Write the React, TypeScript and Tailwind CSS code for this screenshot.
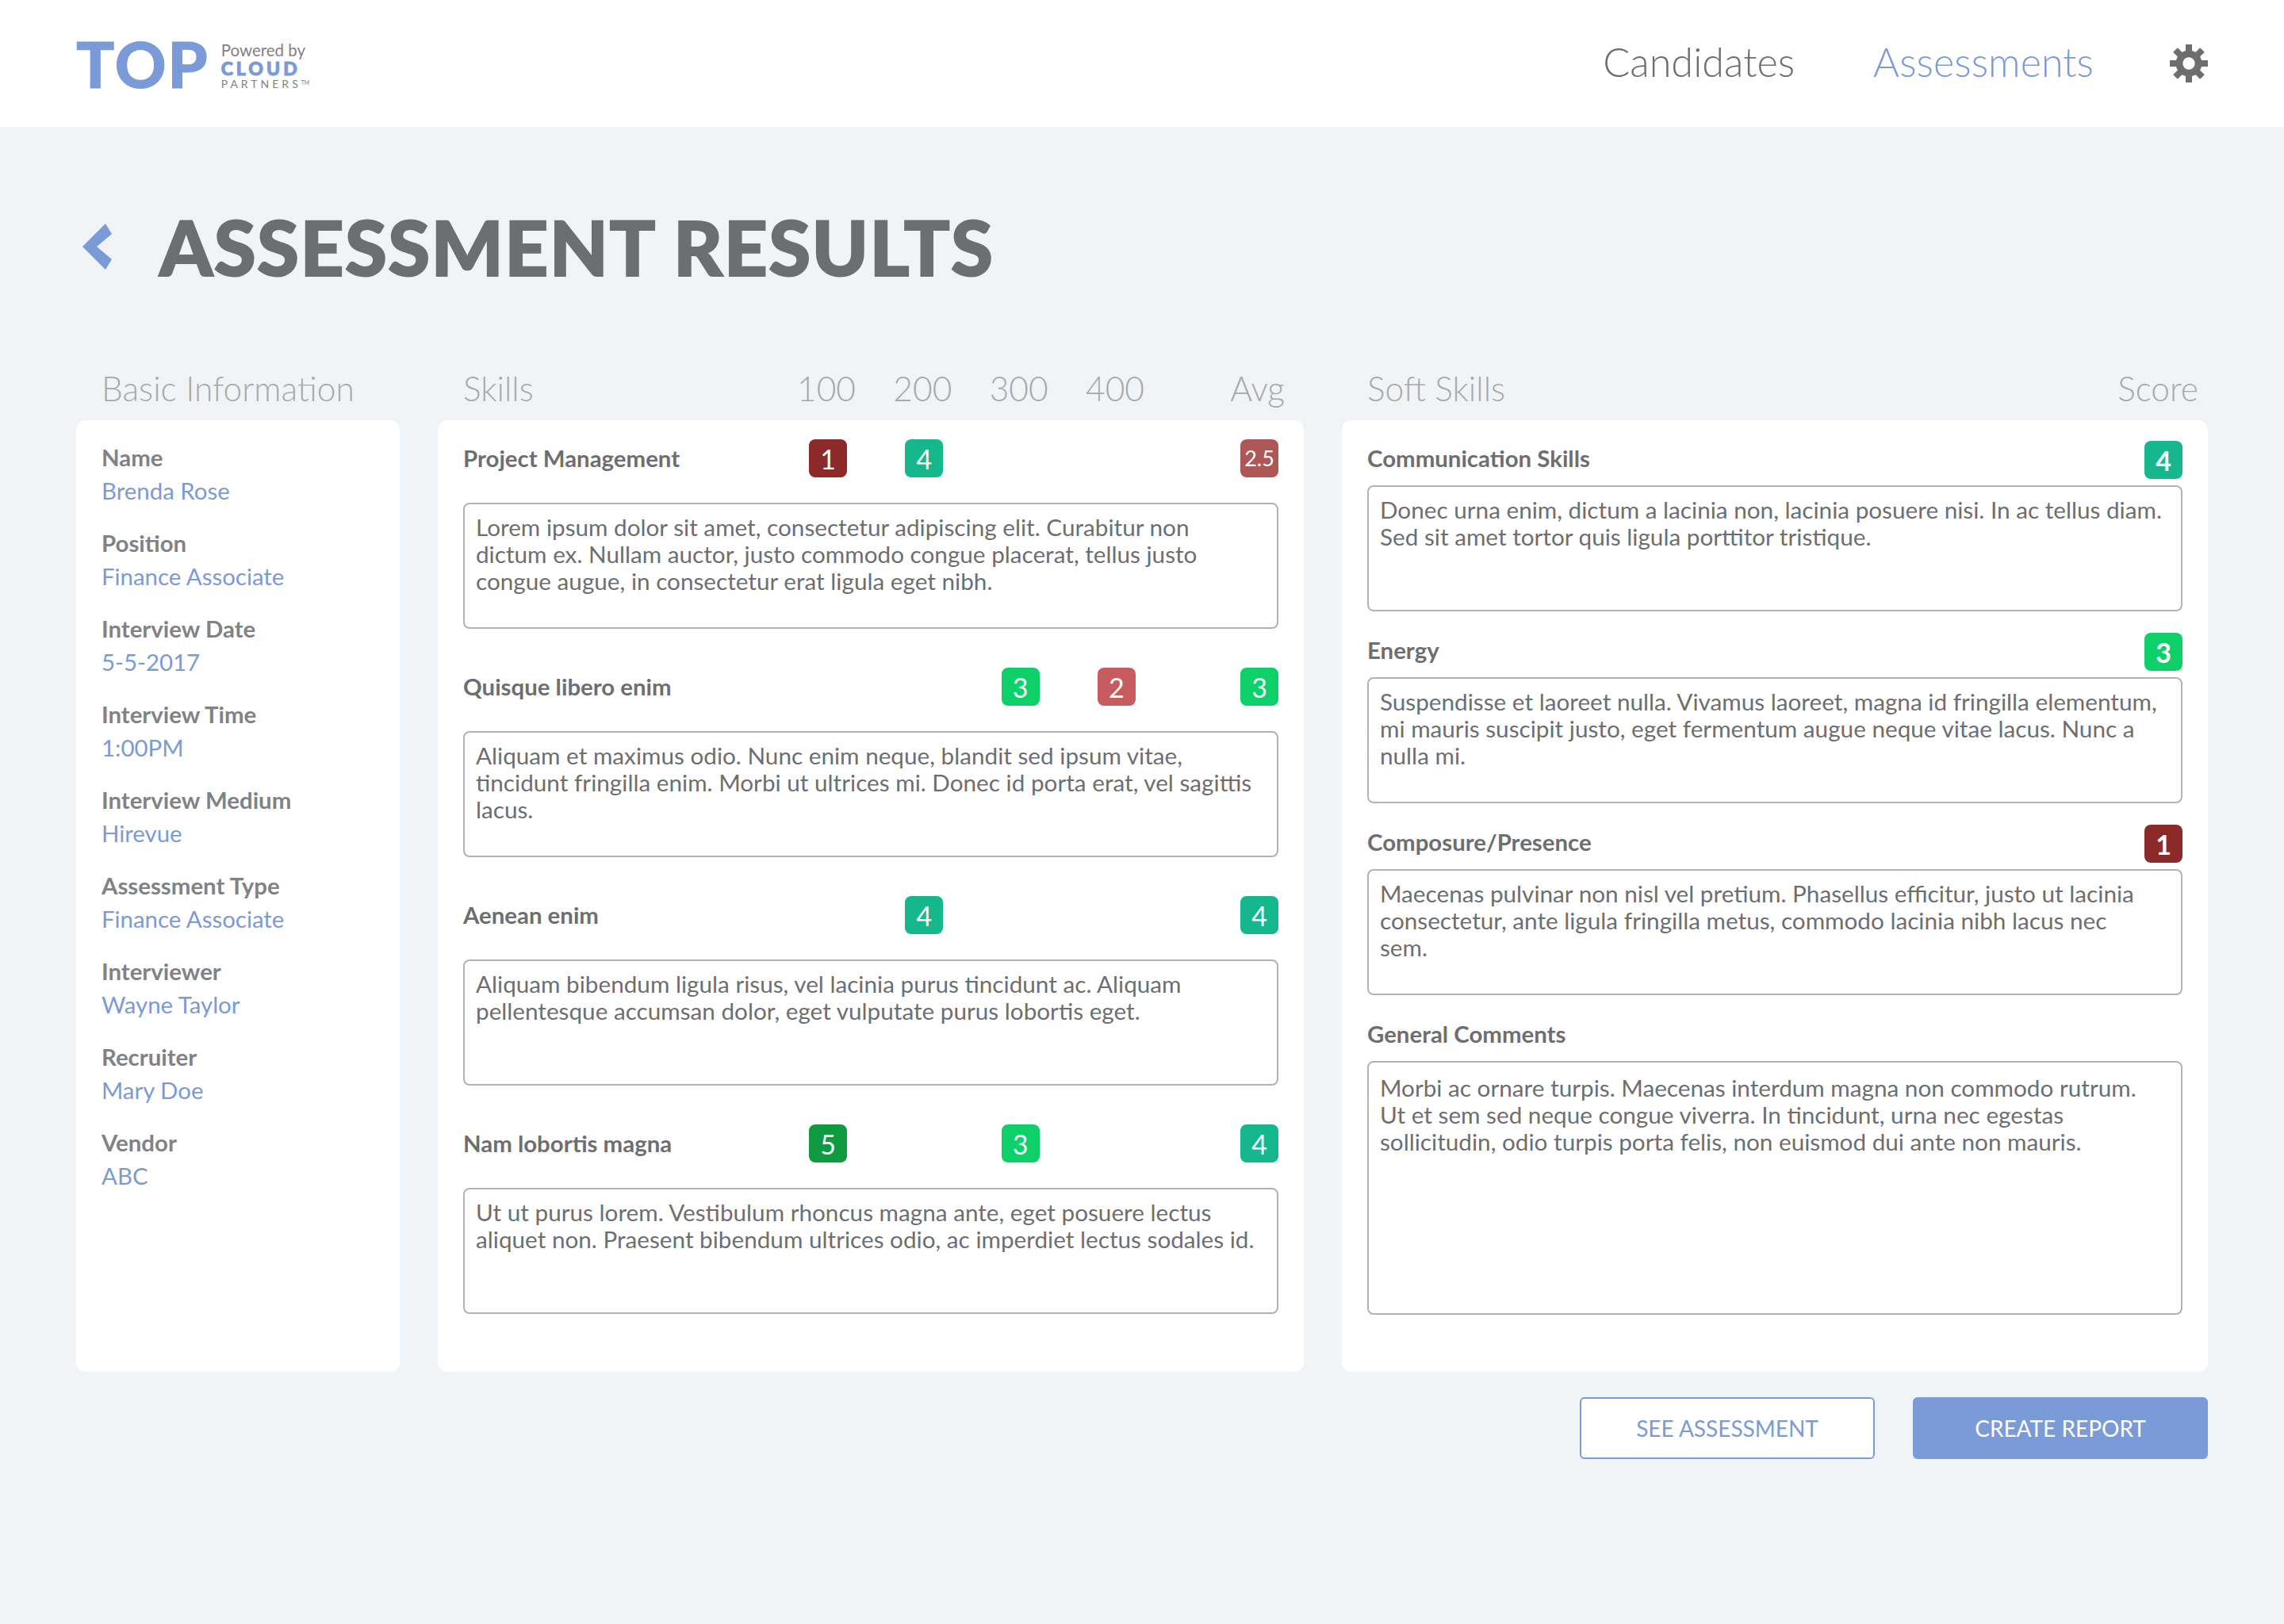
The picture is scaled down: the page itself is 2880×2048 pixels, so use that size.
const sans = { fontFamily: 'Lato, "Noto Sans", sans-serif' };

const BADGE: Record<string, string> = {
  '1': 'bg-[#8c2a2a]',
  '2': 'bg-[#c75c60]',
  '2.5': 'bg-[#ae5757]',
  '3': 'bg-[#0dd068]',
  '4': 'bg-[#17b78e]',
  '5': 'bg-[#0f9a42]',
};

const BASIC_INFO = [
  ['Name', 'Brenda Rose'],
  ['Position', 'Finance Associate'],
  ['Interview Date', '5-5-2017'],
  ['Interview Time', '1:00PM'],
  ['Interview Medium', 'Hirevue'],
  ['Assessment Type', 'Finance Associate'],
  ['Interviewer', 'Wayne Taylor'],
  ['Recruiter', 'Mary Doe'],
  ['Vendor', 'ABC'],
];

const SKILLS = [
  {
    name: 'Project Management',
    scores: ['1', '4', '', ''],
    avg: '2.5',
    text: 'Lorem ipsum dolor sit amet, consectetur adipiscing elit. Curabitur non dictum ex. Nullam auctor, justo commodo congue placerat, tellus justo congue augue, in consectetur erat ligula eget nibh.',
  },
  {
    name: 'Quisque libero enim',
    scores: ['', '', '3', '2'],
    avg: '3',
    text: 'Aliquam et maximus odio. Nunc enim neque, blandit sed ipsum vitae, tincidunt fringilla enim. Morbi ut ultrices mi. Donec id porta erat, vel sagittis lacus.',
  },
  {
    name: 'Aenean enim',
    scores: ['', '4', '', ''],
    avg: '4',
    text: 'Aliquam bibendum ligula risus, vel lacinia purus tincidunt ac. Aliquam pellentesque accumsan dolor, eget vulputate purus lobortis eget.',
  },
  {
    name: 'Nam lobortis magna',
    scores: ['5', '', '3', ''],
    avg: '4',
    text: 'Ut ut purus lorem. Vestibulum rhoncus magna ante, eget posuere lectus aliquet non. Praesent bibendum ultrices odio, ac imperdiet lectus sodales id.',
  },
];

const SOFT_SKILLS = [
  {
    name: 'Communication Skills',
    score: '4',
    text: 'Donec urna enim, dictum a lacinia non, lacinia posuere nisi. In ac tellus diam. Sed sit amet tortor quis ligula porttitor tristique.',
  },
  {
    name: 'Energy',
    score: '3',
    text: 'Suspendisse et laoreet nulla. Vivamus laoreet, magna id fringilla elementum, mi mauris suscipit justo, eget fermentum augue neque vitae lacus. Nunc a nulla mi.',
  },
  {
    name: 'Composure/Presence',
    score: '1',
    text: 'Maecenas pulvinar non nisl vel pretium. Phasellus efficitur, justo ut lacinia consectetur, ante ligula fringilla metus, commodo lacinia nibh lacus nec\nsem.',
  },
];

function Badge({ value }: { value: string }) {
  return (
    <div
      className={`flex h-[48px] w-[48px] items-center justify-center rounded-[8px] text-white ${BADGE[value]} ${
        value === '2.5' ? 'text-[27px]' : 'text-[34px]'
      }`}
    >
      {value}
    </div>
  );
}

function TextBox({ text, size = 'h-[159px] py-[12px]' }: { text: string; size?: string }) {
  return (
    <div className={`${size} whitespace-pre-line rounded-[8px] border-2 border-[#b1b3b6] bg-white px-[14px] text-[29.7px] leading-[34px] text-[#6d6e70]`}>
      {text}
    </div>
  );
}

function Gear() {
  return (
    <svg viewBox="0 0 48 48" className="h-[48px] w-[48px]" fill="#6d6e70">
      {[0, 45, 90, 135].map((a) => (
        <rect key={a} x="20" y="0" width="8" height="48" transform={`rotate(${a} 24 24)`} />
      ))}
      <circle cx="24" cy="24" r="16.5" />
      <circle cx="24" cy="24" r="7.7" fill="#ffffff" />
    </svg>
  );
}

export default function App() {
  return (
    <div className="h-[2048px] w-[2880px] bg-[#f0f4f7]" style={sans}>
      <header className="flex h-[160px] items-center justify-between bg-white px-[96px]">
        <div className="flex items-center">
          <span className="text-[80px] font-black leading-none tracking-[2px] text-[#7a9ad8] [-webkit-text-stroke:1px_#7a9ad8]">TOP</span>
          <div className="ml-[15px] flex flex-col pt-[4px]">
            <span className="text-[20.5px] leading-[24px] text-[#808285]">Powered by</span>
            <span className="text-[23px] font-black leading-[23px] tracking-[4px] text-[#7a9ad8] [-webkit-text-stroke:1px_#7a9ad8]">CLOUD</span>
            <span className="text-[14px] leading-[16px] tracking-[4px] text-[#808285]">
              PARTNERS<sup className="text-[7px] tracking-normal">TM</sup>
            </span>
          </div>
        </div>
        <nav className="flex items-center">
          <a className="-mt-[4px] text-[50.4px] font-light text-[#6d6e70]">Candidates</a>
          <a className="-mt-[4px] ml-[99px] text-[50.4px] font-light text-[#7a9ad8]">Assessments</a>
          <div className="ml-[96px]">
            <Gear />
          </div>
        </nav>
      </header>

      <div className="flex h-[199px] items-end px-[96px]">
        <div className="flex items-center">
          <svg viewBox="0 0 37 58" className="ml-[8px] h-[58px] w-[37px]" fill="#7a9ad8">
            <path d="M29 0L37 13L18 29L37 45L29 58L0 29Z" />
          </svg>
          <h1 className="ml-[60px] text-[96px] font-black leading-none tracking-[1.4px] text-[#6d6e70] [-webkit-text-stroke:2px_#6d6e70]">ASSESSMENT RESULTS</h1>
        </div>
      </div>

      <main className="mt-[91px] px-[96px]">
        <div className="grid grid-cols-[408px_1092px_1092px] gap-x-[48px]">
          <section>
            <div className="flex h-[80px] items-center px-[32px] text-[42.5px] font-light text-[#a7a9ac]">Basic Information</div>
            <div className="h-[1200px] rounded-[12px] bg-white px-[32px] pt-[26px]">
              {BASIC_INFO.map(([label, value]) => (
                <div key={label} className="mb-[24px]">
                  <div className="text-[29.4px] font-bold leading-[42px] text-[#808285]">{label}</div>
                  <div className="text-[29.4px] leading-[42px] text-[#7a9ad8]">{value}</div>
                </div>
              ))}
            </div>
          </section>

          <section>
            <div className="flex h-[80px] items-center pl-[32px] pr-[24px] text-[42.5px] font-light text-[#a7a9ac]">
              <div className="w-[434px]">Skills</div>
              {['100', '200', '300', '400'].map((h) => (
                <div key={h} className="mr-[73.33px] flex w-[48px] justify-center">
                  {h}
                </div>
              ))}
              <div className="ml-auto">Avg</div>
            </div>
            <div className="flex h-[1200px] flex-col gap-[49px] rounded-[12px] bg-white px-[32px] pt-[24px]">
              {SKILLS.map((s) => (
                <div key={s.name} className="flex flex-col gap-[32px]">
                  <div className="flex h-[48px] items-center">
                    <div className="w-[436px] text-[29.4px] font-bold text-[#6d6e70]">{s.name}</div>
                    {s.scores.map((v, i) => (
                      <div key={i} className="mr-[73.33px] w-[48px]">
                        {v && <Badge value={v} />}
                      </div>
                    ))}
                    <div className="ml-auto">
                      <Badge value={s.avg} />
                    </div>
                  </div>
                  <TextBox text={s.text} />
                </div>
              ))}
            </div>
          </section>

          <section>
            <div className="flex h-[80px] items-center justify-between pl-[32px] pr-[12px] text-[42.5px] font-light text-[#a7a9ac]">
              <span>Soft Skills</span>
              <span>Score</span>
            </div>
            <div className="flex h-[1200px] flex-col gap-[27px] rounded-[12px] bg-white px-[32px] pt-[26px]">
              {SOFT_SKILLS.map((s) => (
                <div key={s.name} className="flex flex-col gap-[8px]">
                  <div className="flex h-[48px] items-center justify-between text-[29.4px] font-bold text-[#6d6e70]">
                    <span className="pb-[3px]">{s.name}</span>
                    <Badge value={s.score} />
                  </div>
                  <TextBox text={s.text} />
                </div>
              ))}
              <div className="flex flex-col gap-[8px]">
                <div className="flex h-[48px] items-center pb-[3px] text-[29.4px] font-bold text-[#6d6e70]">General Comments</div>
                <TextBox
                  size="h-[320px] py-[15px]"
                  text={'Morbi ac ornare turpis. Maecenas interdum magna non commodo rutrum.\nUt et sem sed neque congue viverra. In tincidunt, urna nec egestas sollicitudin, odio turpis porta felis, non euismod dui ante non mauris.'}
                />
              </div>
            </div>
          </section>
        </div>

        <div className="mt-[32px] flex justify-end gap-[48px]">
          <button className="h-[78px] w-[372px] rounded-[6px] border-2 border-[#7a9ad8] bg-white text-[28px] text-[#7a9ad8]">SEE ASSESSMENT</button>
          <button className="h-[78px] w-[372px] rounded-[6px] bg-[#7a9ad8] text-[28px] text-white">CREATE REPORT</button>
        </div>
      </main>
    </div>
  );
}
